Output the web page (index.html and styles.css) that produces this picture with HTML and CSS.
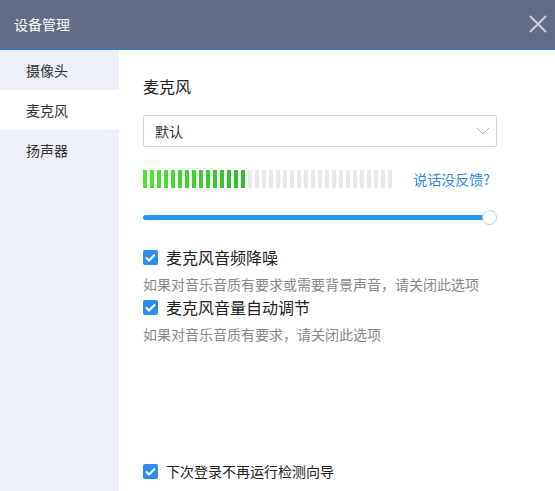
FILE: index.html
```html
<!DOCTYPE html>
<html lang="zh-CN">
<head>
  <meta charset="UTF-8">
  <title>设备管理</title>
  <link rel="stylesheet" href="styles.css">
</head>
<body>
  <div class="dialog">
    <div class="titlebar">
      <span class="title">设备管理</span>
      <svg class="close" width="18" height="18" viewBox="0 0 18 18">
        <path d="M1 1 L17 17 M17 1 L1 17" stroke="#c9cdd8" stroke-width="2.2" fill="none"/>
      </svg>
    </div>
    <div class="body">
      <ul class="nav">
        <li>摄像头</li>
        <li class="active">麦克风</li>
        <li>扬声器</li>
      </ul>
      <div class="panel">
        <h3 class="panel-title">麦克风</h3>
        <div class="select">
          <span>默认</span>
          <svg width="14" height="8" viewBox="0 0 14 8">
            <path d="M1 1 L7 7 L13 1" stroke="#b4b8c0" stroke-width="1" fill="none"/>
          </svg>
        </div>
        <div class="meter-row">
          <div class="meter">
            <div class="level" style="width:102px"></div>
          </div>
          <a class="feedback" href="#">说话没反馈?</a>
        </div>
        <div class="slider">
          <div class="track"></div>
          <div class="thumb"></div>
        </div>
        <label class="check">
          <span class="box"><svg width="11" height="9" viewBox="0 0 11 9"><path d="M1 4.5 L4 7.5 L10 1.5" stroke="#fff" stroke-width="2" fill="none"/></svg></span>
          麦克风音频降噪
        </label>
        <p class="hint">如果对音乐音质有要求或需要背景声音，请关闭此选项</p>
        <label class="check second">
          <span class="box"><svg width="11" height="9" viewBox="0 0 11 9"><path d="M1 4.5 L4 7.5 L10 1.5" stroke="#fff" stroke-width="2" fill="none"/></svg></span>
          麦克风音量自动调节
        </label>
        <p class="hint">如果对音乐音质有要求，请关闭此选项</p>
        <label class="check footer">
          <span class="box"><svg width="11" height="9" viewBox="0 0 11 9"><path d="M1 4.5 L4 7.5 L10 1.5" stroke="#fff" stroke-width="2" fill="none"/></svg></span>
          下次登录不再运行检测向导
        </label>
      </div>
    </div>
  </div>
</body>
</html>
```

FILE: styles.css
```css
* { box-sizing: border-box; }
body { margin: 0; font-family: "Noto Sans CJK SC", "Noto Sans", sans-serif; color: #333; background: #fff; }
.dialog { width: 555px; height: 491px; display: flex; flex-direction: column; }

.titlebar { height: 50px; flex: none; background: #626b88; border-bottom: 1px solid #2a7ad8; display: flex; align-items: center; justify-content: space-between; padding: 0 8px 2px 14px; }
.title { color: #fff; font-size: 14px; }

.body { flex: 1; display: flex; }
.nav { width: 119px; margin: 0; padding: 0; list-style: none; background: #edf0f8; }
.nav li { height: 40px; line-height: 40px; padding-left: 26px; font-size: 14px; color: #333; }
.nav li.active { background: #fff; }

.panel { flex: 1; display: flex; flex-direction: column; padding: 26px 58px 10px 24px; }
.panel-title { margin: 0; font-size: 16px; font-weight: normal; line-height: 20px; color: #222; }

.select { margin-top: 19px; height: 32px; border: 1px solid #d3d7de; border-radius: 2px; display: flex; align-items: center; justify-content: space-between; padding: 0 6px 0 11px; font-size: 14px; color: #333; }

.meter-row { margin-top: 23px; height: 18px; display: flex; align-items: center; justify-content: space-between; }
.meter { width: 249px; height: 18px; background: repeating-linear-gradient(90deg, #e6e8eb 0 4px, #fff 4px 7px); }
.level { height: 100%; background: repeating-linear-gradient(90deg, transparent 0 4px, #fff 4px 7px), linear-gradient(90deg, #4ce82f, #2fbc2a); }
.feedback { color: #2b8ae6; font-size: 14px; text-decoration: none; margin-right: 7px; }

.slider { margin-top: 22px; height: 14px; display: flex; align-items: center; }
.track { flex: 1; height: 5px; border-radius: 3px; background: #2196f0; }
.thumb { width: 15px; height: 15px; margin-left: -4px; border-radius: 50%; background: #fff; border: 1px solid #c8cbd0; flex: none; }

.check { display: flex; align-items: center; gap: 8px; height: 20px; margin-top: 23px; font-size: 16px; color: #222; }
.check.second { margin-top: 4px; }
.check.footer { margin-top: auto; font-size: 14px; }
.box { width: 15px; height: 15px; border-radius: 2px; background: #2d8cf0; display: flex; align-items: center; justify-content: center; flex: none; }

.hint { margin: 8px 0 0; font-size: 14px; line-height: 18px; color: #888; }
```
